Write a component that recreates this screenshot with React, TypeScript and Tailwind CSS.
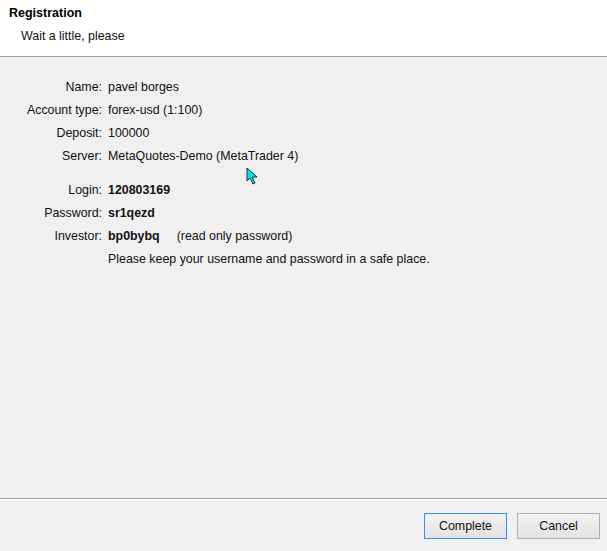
const rows1 = [
  { label: 'Name:', value: 'pavel borges' },
  { label: 'Account type:', value: 'forex-usd (1:100)' },
  { label: 'Deposit:', value: '100000' },
  { label: 'Server:', value: 'MetaQuotes-Demo (MetaTrader 4)' },
];

const Row = ({ label, children }: { label: string; children: React.ReactNode }) => (
  <div className="flex h-[23px] items-center">
    <div className="w-[102px] shrink-0 text-right">{label}</div>
    <div className="pl-[6px] flex items-center">{children}</div>
  </div>
);

const Cursor = () => (
  <svg className="absolute left-[246px] top-[167px]" width="14" height="18" viewBox="0 0 14 18">
    <path d="M1 1 L1 14 L4 11 L7 17 L9 16 L6 10 L11 10 Z" fill="#10dcf0" stroke="#0a3a44" strokeWidth="1" />
  </svg>
);

export default function App() {
  return (
    <div
      className="w-[607px] h-[551px] flex flex-col bg-[#f0f0f0] text-[12.4px] text-[#111] relative overflow-hidden"
      style={{ fontFamily: '"Liberation Sans", Arial, sans-serif' }}
    >
      {/* header */}
      <div className="h-[57px] bg-white border-b border-[#a0a0a0] shrink-0">
        <div className="pl-[9px] pt-[4px] font-bold text-[12.5px] text-black">Registration</div>
        <div className="pl-[21px] pt-[4px]">Wait a little, please</div>
      </div>

      {/* body */}
      <div className="flex-1 pt-[19px]">
        {rows1.map((r) => (
          <Row key={r.label} label={r.label}>{r.value}</Row>
        ))}
        <div className="h-[11px]" />
        <Row label="Login:"><span className="font-bold">120803169</span></Row>
        <Row label="Password:"><span className="font-bold">sr1qezd</span></Row>
        <Row label="Investor:">
          <span className="font-bold">bp0bybq</span>
          <span className="ml-[17px]">(read only password)</span>
        </Row>
        <Row label="">Please keep your username and password in a safe place.</Row>
      </div>

      {/* footer */}
      <div className="h-[53px] shrink-0 border-t border-[#a0a0a0] shadow-[inset_0_1px_0_#ffffff] flex justify-end items-start pt-[14px] pr-[7px] gap-[10px]">
        <button className="w-[83px] h-[26px] border border-[#3c8ee0] bg-gradient-to-b from-[#f2f2f2] to-[#e3e3e3]">
          Complete
        </button>
        <button className="w-[83px] h-[26px] border border-[#adadad] bg-gradient-to-b from-[#f2f2f2] to-[#e3e3e3]">
          Cancel
        </button>
      </div>

      <Cursor />
    </div>
  );
}
